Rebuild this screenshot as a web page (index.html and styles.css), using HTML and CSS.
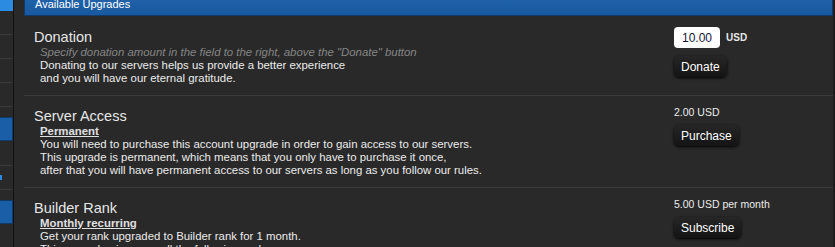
FILE: index.html
```html
<!DOCTYPE html>
<html lang="en">
<head>
  <meta charset="UTF-8">
  <title>Available Upgrades</title>
  <link rel="stylesheet" href="styles.css">
</head>
<body>

  <div class="page">
    <div class="sidebar">
      <div class="side-top"></div>
      <div class="side-item"></div>
      <div class="side-item"></div>
      <div class="side-item"></div>
      <div class="side-item"></div>
      <div class="side-active"></div>
      <div class="side-item"></div>
      <div class="side-item"><span class="side-mark"></span></div>
      <div class="side-active"></div>
    </div>

    <div class="main">
      <div class="panel-head">Available Upgrades</div>

      <div class="upgrade first">
        <div class="info">
          <div class="title">Donation</div>
          <div class="desc">
            <div class="hint">Specify donation amount in the field to the right, above the "Donate" button</div>
            Donating to our servers helps us provide a better experience<br>
            and you will have our eternal gratitude.
          </div>
        </div>
        <div class="buy">
          <div class="amount">
            <input type="text" class="amount-input" value="10.00">
            <span class="currency">USD</span>
          </div>
          <button class="btn btn-donate">Donate</button>
        </div>
      </div>

      <div class="upgrade">
        <div class="info">
          <div class="title">Server Access</div>
          <div class="desc">
            <div class="term">Permanent</div>
            You will need to purchase this account upgrade in order to gain access to our servers.<br>
            This upgrade is permanent, which means that you only have to purchase it once,<br>
            after that you will have permanent access to our servers as long as you follow our rules.
          </div>
        </div>
        <div class="buy">
          <div class="price">2.00 USD</div>
          <button class="btn">Purchase</button>
        </div>
      </div>

      <div class="upgrade">
        <div class="info">
          <div class="title">Builder Rank</div>
          <div class="desc">
            <div class="term">Monthly recurring</div>
            Get your rank upgraded to Builder rank for 1 month.<br>
            This upgrade gives you all the following perks:
          </div>
        </div>
        <div class="buy">
          <div class="price">5.00 USD per month</div>
          <button class="btn">Subscribe</button>
        </div>
      </div>
    </div>
  </div>

</body>
</html>
```

FILE: styles.css
```css
body {
  margin: 0;
  background-color: #292929;
  font-family: "Liberation Sans", Arial, sans-serif;
  color: #ececec;
  overflow: hidden;
}

.page {
  display: flex;
  height: 100vh;
  border-right: 2px solid #1d1d1d;
}

.sidebar {
  width: 13px;
  flex-shrink: 0;
  border-right: 1px solid #111;
  display: flex;
  flex-direction: column;
}

.side-top {
  height: 11px;
  background: #2a8be0;
}

.side-item {
  height: 23px;
  border-bottom: 1px solid #3a3a3a;
}

.side-active {
  height: 22px;
  margin-top: 10px;
  margin-bottom: 1px;
  background: #1b5ea8;
  border: 1px solid #0f3a6c;
  border-left: none;
}

.side-mark {
  display: block;
  width: 2px;
  height: 5px;
  margin-top: 9px;
  background: #2a8be0;
}

.main {
  flex: 1;
  margin-left: 10px;
}

.panel-head {
  margin-top: -8px;
  height: 17px;
  padding: 6px 0 0 10px;
  background: linear-gradient(#2466ad, #17589f);
  border: 1px solid #0e3b6e;
  border-top: none;
  color: #fff;
  font-size: 11px;
  line-height: 13px;
}

.upgrade {
  display: grid;
  grid-template-columns: 1fr 159px;
  padding: 10px 0 10px 10px;
  border-bottom: 1px solid #3b3b3b;
}

.upgrade.first {
  padding-top: 11px;
}

.title {
  margin-top: 1px;
  font-size: 14.5px;
  line-height: 18px;
  color: #e6e6e6;
}

.desc {
  margin-left: 6px;
  font-size: 11.4px;
  line-height: 13px;
}

.hint {
  font-style: italic;
  color: #858585;
}

.term {
  font-weight: bold;
  text-decoration: underline;
  color: #e0e0e0;
}

.buy {
  display: flex;
  flex-direction: column;
  align-items: flex-start;
  gap: 7px;
}

.amount {
  display: flex;
  align-items: center;
  gap: 6px;
}

.amount-input {
  width: 46px;
  height: 21px;
  box-sizing: border-box;
  padding: 0;
  border: none;
  border-radius: 4px;
  background: #fff;
  color: #16163a;
  font-family: "Liberation Sans", Arial, sans-serif;
  font-size: 12px;
  text-align: center;
}

.currency {
  font-size: 10px;
  font-weight: bold;
  color: #e6e6e6;
}

.price {
  font-size: 10.5px;
  line-height: 12px;
}

.btn {
  height: 21px;
  padding: 0 7px;
  background: linear-gradient(#262626, #141414);
  color: #fff;
  border: none;
  border-radius: 5px;
  box-shadow: 0 1px 3px #000;
  font-family: "Liberation Sans", Arial, sans-serif;
  font-size: 12px;
  cursor: pointer;
}

.btn:hover {
  background: #333;
}

.btn-donate {
  margin-top: 1px;
}
```
